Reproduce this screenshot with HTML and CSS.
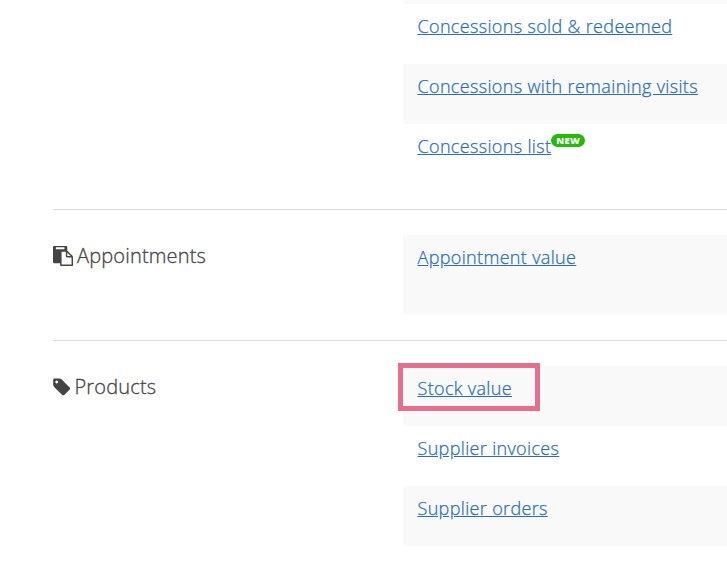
FILE: index.html
```html
<!DOCTYPE html>
<html lang="en">
<head>
  <meta charset="utf-8">
  <title>Reports</title>
  <meta name="viewport" content="width=device-width, initial-scale=1">
  <link rel="stylesheet" href="styles.css">
</head>
<body>
  <div class="reports">
    <div class="section first">
      <h3></h3>
      <ul>
        <li class="cut"></li>
        <li><a href="#">Concessions sold &amp; redeemed</a></li>
        <li><a href="#">Concessions with remaining visits</a></li>
        <li><a href="#">Concessions list</a><span class="badge">NEW</span></li>
      </ul>
    </div>

    <div class="section single">
      <h3>
        <svg class="icon paste" viewBox="0 0 1792 1792"><path d="M768 1664h896v-640h-416q-40 0-68-28t-28-68v-416h-384v1152zm256-1400v-120q0-13-9.5-22.5t-22.5-9.5h-704q-13 0-22.5 9.5t-9.5 22.5v120q0 13 9.5 22.5t22.5 9.5h704q13 0 22.5-9.5t9.5-22.5zm256 632h299l-299-299v299zm512 128v672q0 40-28 68t-68 28h-960q-40 0-68-28t-28-68v-160h-544q-40 0-68-28t-28-68v-1344q0-40 28-68t68-28h1088q40 0 68 28t28 68v328q21 13 36 28l408 408q28 28 48 76t20 88z"/></svg>
        <span>Appointments</span>
      </h3>
      <ul>
        <li><a href="#">Appointment value</a></li>
      </ul>
    </div>

    <div class="section">
      <h3>
        <svg class="icon tag" viewBox="128 0 1536 1792"><path d="M576 448q0-53-37.5-90.5t-90.5-37.5-90.5 37.5-37.5 90.5 37.5 90.5 90.5 37.5 90.5-37.5 37.5-90.5zm1067 576q0 53-37 90l-491 492q-39 37-91 37-53 0-90-37l-715-716q-38-37-64.5-101t-26.5-117v-416q0-52 38-90t90-38h416q53 0 117 26.5t102 64.5l715 714q37 39 37 91z"/></svg>
        <span>Products</span>
      </h3>
      <ul>
        <li class="marked"><a href="#">Stock value</a></li>
        <li><a href="#">Supplier invoices</a></li>
        <li><a href="#">Supplier orders</a></li>
      </ul>
    </div>
  </div>
</body>
</html>
```
FILE: styles.css
```css
*, *::after { box-sizing: border-box; }
body { margin: 0; background: #fff; color: #444; font-family: "Open Sans", sans-serif; overflow: hidden; }
.reports { margin-left: 52.5px; }
.section { display: grid; grid-template-columns: 350px 1fr; padding: 25px 0; border-top: 1px solid #ddd; }
.section.first { padding-top: 0; border-top: none; }

h3 { display: flex; align-items: center; gap: 4.5px; height: 40px; margin: 0; font-size: 20px; font-weight: 300; letter-spacing: 0.17px; -webkit-text-stroke: 0.3px; }
.icon { height: 20px; margin-top: 2px; fill: #444; }
.paste { width: 20px; }
.tag { width: 17.5px; }

ul { margin: 0; padding: 0; list-style: none; }
li { position: relative; height: 60px; padding: 9px 15px; font-size: 18px; font-weight: 300; line-height: 26px; letter-spacing: 0.34px; }
li:nth-child(odd) { background: #f9f9f9; }
.cut { height: 4px; padding: 0; }
.single li { height: 80px; }
a { color: #2a6ebb; text-decoration: underline; -webkit-text-stroke: 0.25px; }

.badge { display: inline-block; height: 13px; padding: 0 5px; border-radius: 7px; background: #26b90b; color: #fff; font-size: 9.5px; font-weight: 800; line-height: 13px; vertical-align: 9px; letter-spacing: 0.2px; }

/* outline drawn over the row */
.marked::after { content: ""; position: absolute; left: -5px; top: -3px; width: 142px; height: 48px; border: 5px solid #e66e8f; }
```
